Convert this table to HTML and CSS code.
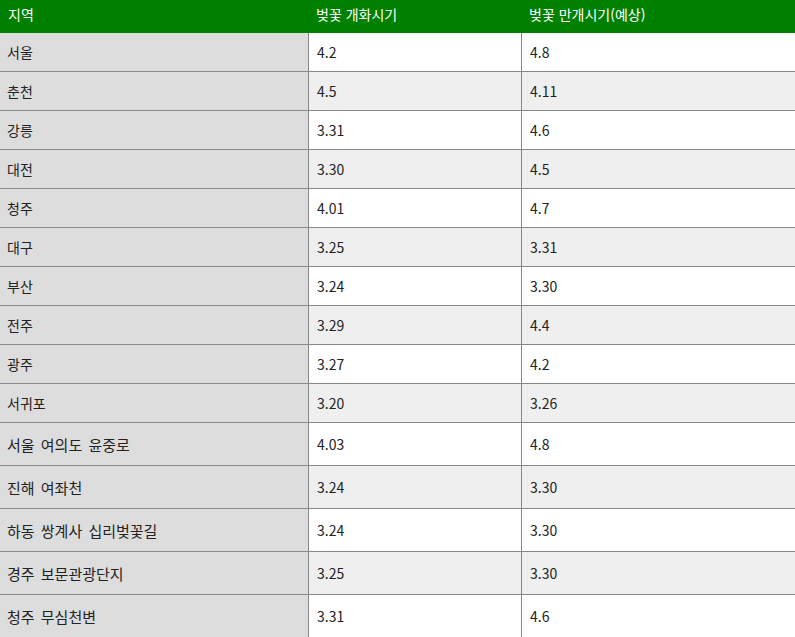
FILE: index.html
```html
<!DOCTYPE html>
<html lang="ko">
<head>
<meta charset="utf-8">
<title>벚꽃 개화시기</title>
<link rel="stylesheet" href="styles.css">
</head>
<body>
<table class="bloom">
  <colgroup>
    <col class="c-region">
    <col class="c-open">
    <col class="c-full">
  </colgroup>
  <thead>
    <tr class="head">
      <th>지역</th>
      <th>벚꽃 개화시기</th>
      <th>벚꽃 만개시기(예상)</th>
    </tr>
  </thead>
  <tbody>
    <tr class="row"><td>서울</td><td>4.2</td><td>4.8</td></tr>
    <tr class="row alt"><td>춘천</td><td>4.5</td><td>4.11</td></tr>
    <tr class="row"><td>강릉</td><td>3.31</td><td>4.6</td></tr>
    <tr class="row alt"><td>대전</td><td>3.30</td><td>4.5</td></tr>
    <tr class="row"><td>청주</td><td>4.01</td><td>4.7</td></tr>
    <tr class="row alt"><td>대구</td><td>3.25</td><td>3.31</td></tr>
    <tr class="row"><td>부산</td><td>3.24</td><td>3.30</td></tr>
    <tr class="row alt"><td>전주</td><td>3.29</td><td>4.4</td></tr>
    <tr class="row"><td>광주</td><td>3.27</td><td>4.2</td></tr>
    <tr class="row alt"><td>서귀포</td><td>3.20</td><td>3.26</td></tr>
    <tr class="row tall"><td>서울 여의도 윤중로</td><td>4.03</td><td>4.8</td></tr>
    <tr class="row tall alt"><td>진해 여좌천</td><td>3.24</td><td>3.30</td></tr>
    <tr class="row tall"><td>하동 쌍계사 십리벚꽃길</td><td>3.24</td><td>3.30</td></tr>
    <tr class="row tall alt"><td>경주 보문관광단지</td><td>3.25</td><td>3.30</td></tr>
    <tr class="row tall"><td>청주 무심천변</td><td>3.31</td><td>4.6</td></tr>
  </tbody>
</table>
</body>
</html>
```

FILE: styles.css
```css
html, body {
  margin: 0;
  padding: 0;
  background: #ffffff;
}

.bloom {
  border-collapse: separate;
  border-spacing: 0;
  width: 795px;
  table-layout: fixed;
  font-family: "Noto Sans CJK KR", "Noto Sans", sans-serif;
  font-size: 14px;
  color: #222222;
}

.c-region { width: 308px; }
.c-open { width: 213px; }
.c-full { width: 274px; }

.bloom th,
.bloom td {
  box-sizing: border-box;
  padding: 0 8px;
  text-align: left;
  vertical-align: middle;
  white-space: nowrap;
}

.head th {
  height: 33px;
  background: #008000;
  color: #ffffff;
  font-weight: normal;
  padding-bottom: 5px;
}

.row td {
  height: 39px;
  border-bottom: 1px solid #888888;
  background: #ffffff;
}

.row.tall td {
  height: 43px;
}

.row td:first-child {
  background: #dddddd;
  padding-left: 7px;
}

.row.tall td:first-child {
  font-size: 15px;
  word-spacing: 2px;
}

.row td + td {
  border-left: 1px solid #888888;
}

.row.alt td {
  background: #efefef;
}

.row.alt td:first-child {
  background: #dddddd;
}
```
